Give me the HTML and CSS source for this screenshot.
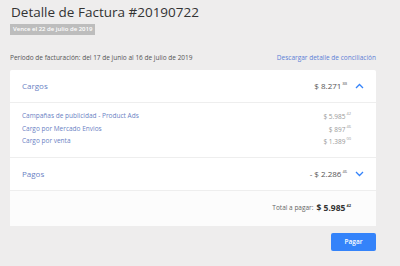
FILE: index.html
```html
<!DOCTYPE html>
<html lang="es">
<head>
<meta charset="utf-8">
<link rel="stylesheet" href="styles.css">
</head>
<body>
<div class="page">
  <h1 class="title">Detalle de Factura #20190722</h1>
  <div class="badge">Vence el 22 de julio de 2019</div>
  <div class="period-row">
    <span class="period">Período de facturación: del 17 de junio al 16 de julio de 2019</span>
    <a class="download">Descargar detalle de conciliación</a>
  </div>
  <div class="card">
    <div class="section-head">
      <span class="section-label">Cargos</span>
      <span class="section-amount">$ 8.271<sup>88</sup></span>
      <svg class="chev" width="9" height="6" viewBox="0 0 9 6"><path d="M1 5 L4.5 1.5 L8 5" fill="none" stroke="#3483fa" stroke-width="1.3"/></svg>
    </div>
    <div class="items">
      <div class="item"><span class="item-label">Campañas de publicidad - Product Ads</span><span class="item-amount">$ 5.985<sup>42</sup></span></div>
      <div class="item"><span class="item-label">Cargo por Mercado Envios</span><span class="item-amount">$ 897<sup>46</sup></span></div>
      <div class="item"><span class="item-label">Cargo por venta</span><span class="item-amount">$ 1.389<sup>00</sup></span></div>
    </div>
    <div class="section-head">
      <span class="section-label">Pagos</span>
      <span class="section-amount">- $ 2.286<sup>46</sup></span>
      <svg class="chev" width="9" height="6" viewBox="0 0 9 6"><path d="M1 1 L4.5 4.5 L8 1" fill="none" stroke="#3483fa" stroke-width="1.3"/></svg>
    </div>
    <div class="total">
      <span class="total-label">Total a pagar:</span>
      <span class="total-amount">$ 5.985<sup>42</sup></span>
    </div>
  </div>
  <div class="actions">
    <button class="pay">Pagar</button>
  </div>
</div>
</body>
</html>
```
FILE: styles.css
```css
* { box-sizing: border-box; }
html, body { margin: 0; padding: 0; }
body {
  background: #eeeded;
  font-family: "Open Sans", "Liberation Sans", sans-serif;
  color: #333;
  width: 400px;
  height: 266px;
  overflow: hidden;
  line-height: 1;
}
.page {
  padding: 4px 24px 0 10px;
}
.title {
  margin: 0;
  font-size: 13.5px;
  font-weight: 400;
  line-height: 17px;
  color: #333;
  padding-left: 1px;
}
.badge {
  width: fit-content;
  margin-top: 3px;
  background: #bdbdbd;
  color: #fff;
  font-size: 6px;
  font-weight: 600;
  line-height: 11px;
  padding: 0 3px;
}
.period-row {
  display: flex;
  justify-content: space-between;
  align-items: center;
  margin-top: 18px;
  font-size: 6.5px;
  line-height: 10px;
}
.period { color: #555; }
.download { color: #5c7fd6; }
.card {
  margin-top: 7px;
  background: #fff;
  border-radius: 2px;
}
.section-head {
  display: flex;
  align-items: center;
  height: 33px;
  padding: 0 12px;
  border-bottom: 1px solid #eee;
}
.section-label {
  flex: 1;
  font-size: 8px;
  color: #6a7fc4;
}
.section-amount {
  font-size: 8px;
  color: #555;
}
sup {
  font-size: 4px;
  vertical-align: 4px;
  margin-left: 1px;
}
.chev { margin-left: 8px; }
.items {
  padding: 7px 25px 9px 12px;
  border-bottom: 1px solid #eee;
}
.item {
  display: flex;
  justify-content: space-between;
  align-items: center;
  height: 12.5px;
  font-size: 6.5px;
}
.item-label { color: #6a7fc4; }
.item-amount { color: #999; }
.total {
  display: flex;
  justify-content: flex-end;
  align-items: center;
  height: 35px;
  padding: 0 25px 0 12px;
  background: #fcfcfc;
}
.total-label { font-size: 6.5px; color: #666; margin-right: 3px; }
.total-amount { font-size: 8.5px; font-weight: 700; color: #333; }
.actions {
  display: flex;
  justify-content: flex-end;
  margin-top: 7px;
}
.pay {
  width: 45px;
  height: 18px;
  border: none;
  border-radius: 2px;
  background: #3483fa;
  color: #fff;
  font-family: inherit;
  font-size: 6.5px;
  font-weight: 600;
  padding: 0;
}
```
